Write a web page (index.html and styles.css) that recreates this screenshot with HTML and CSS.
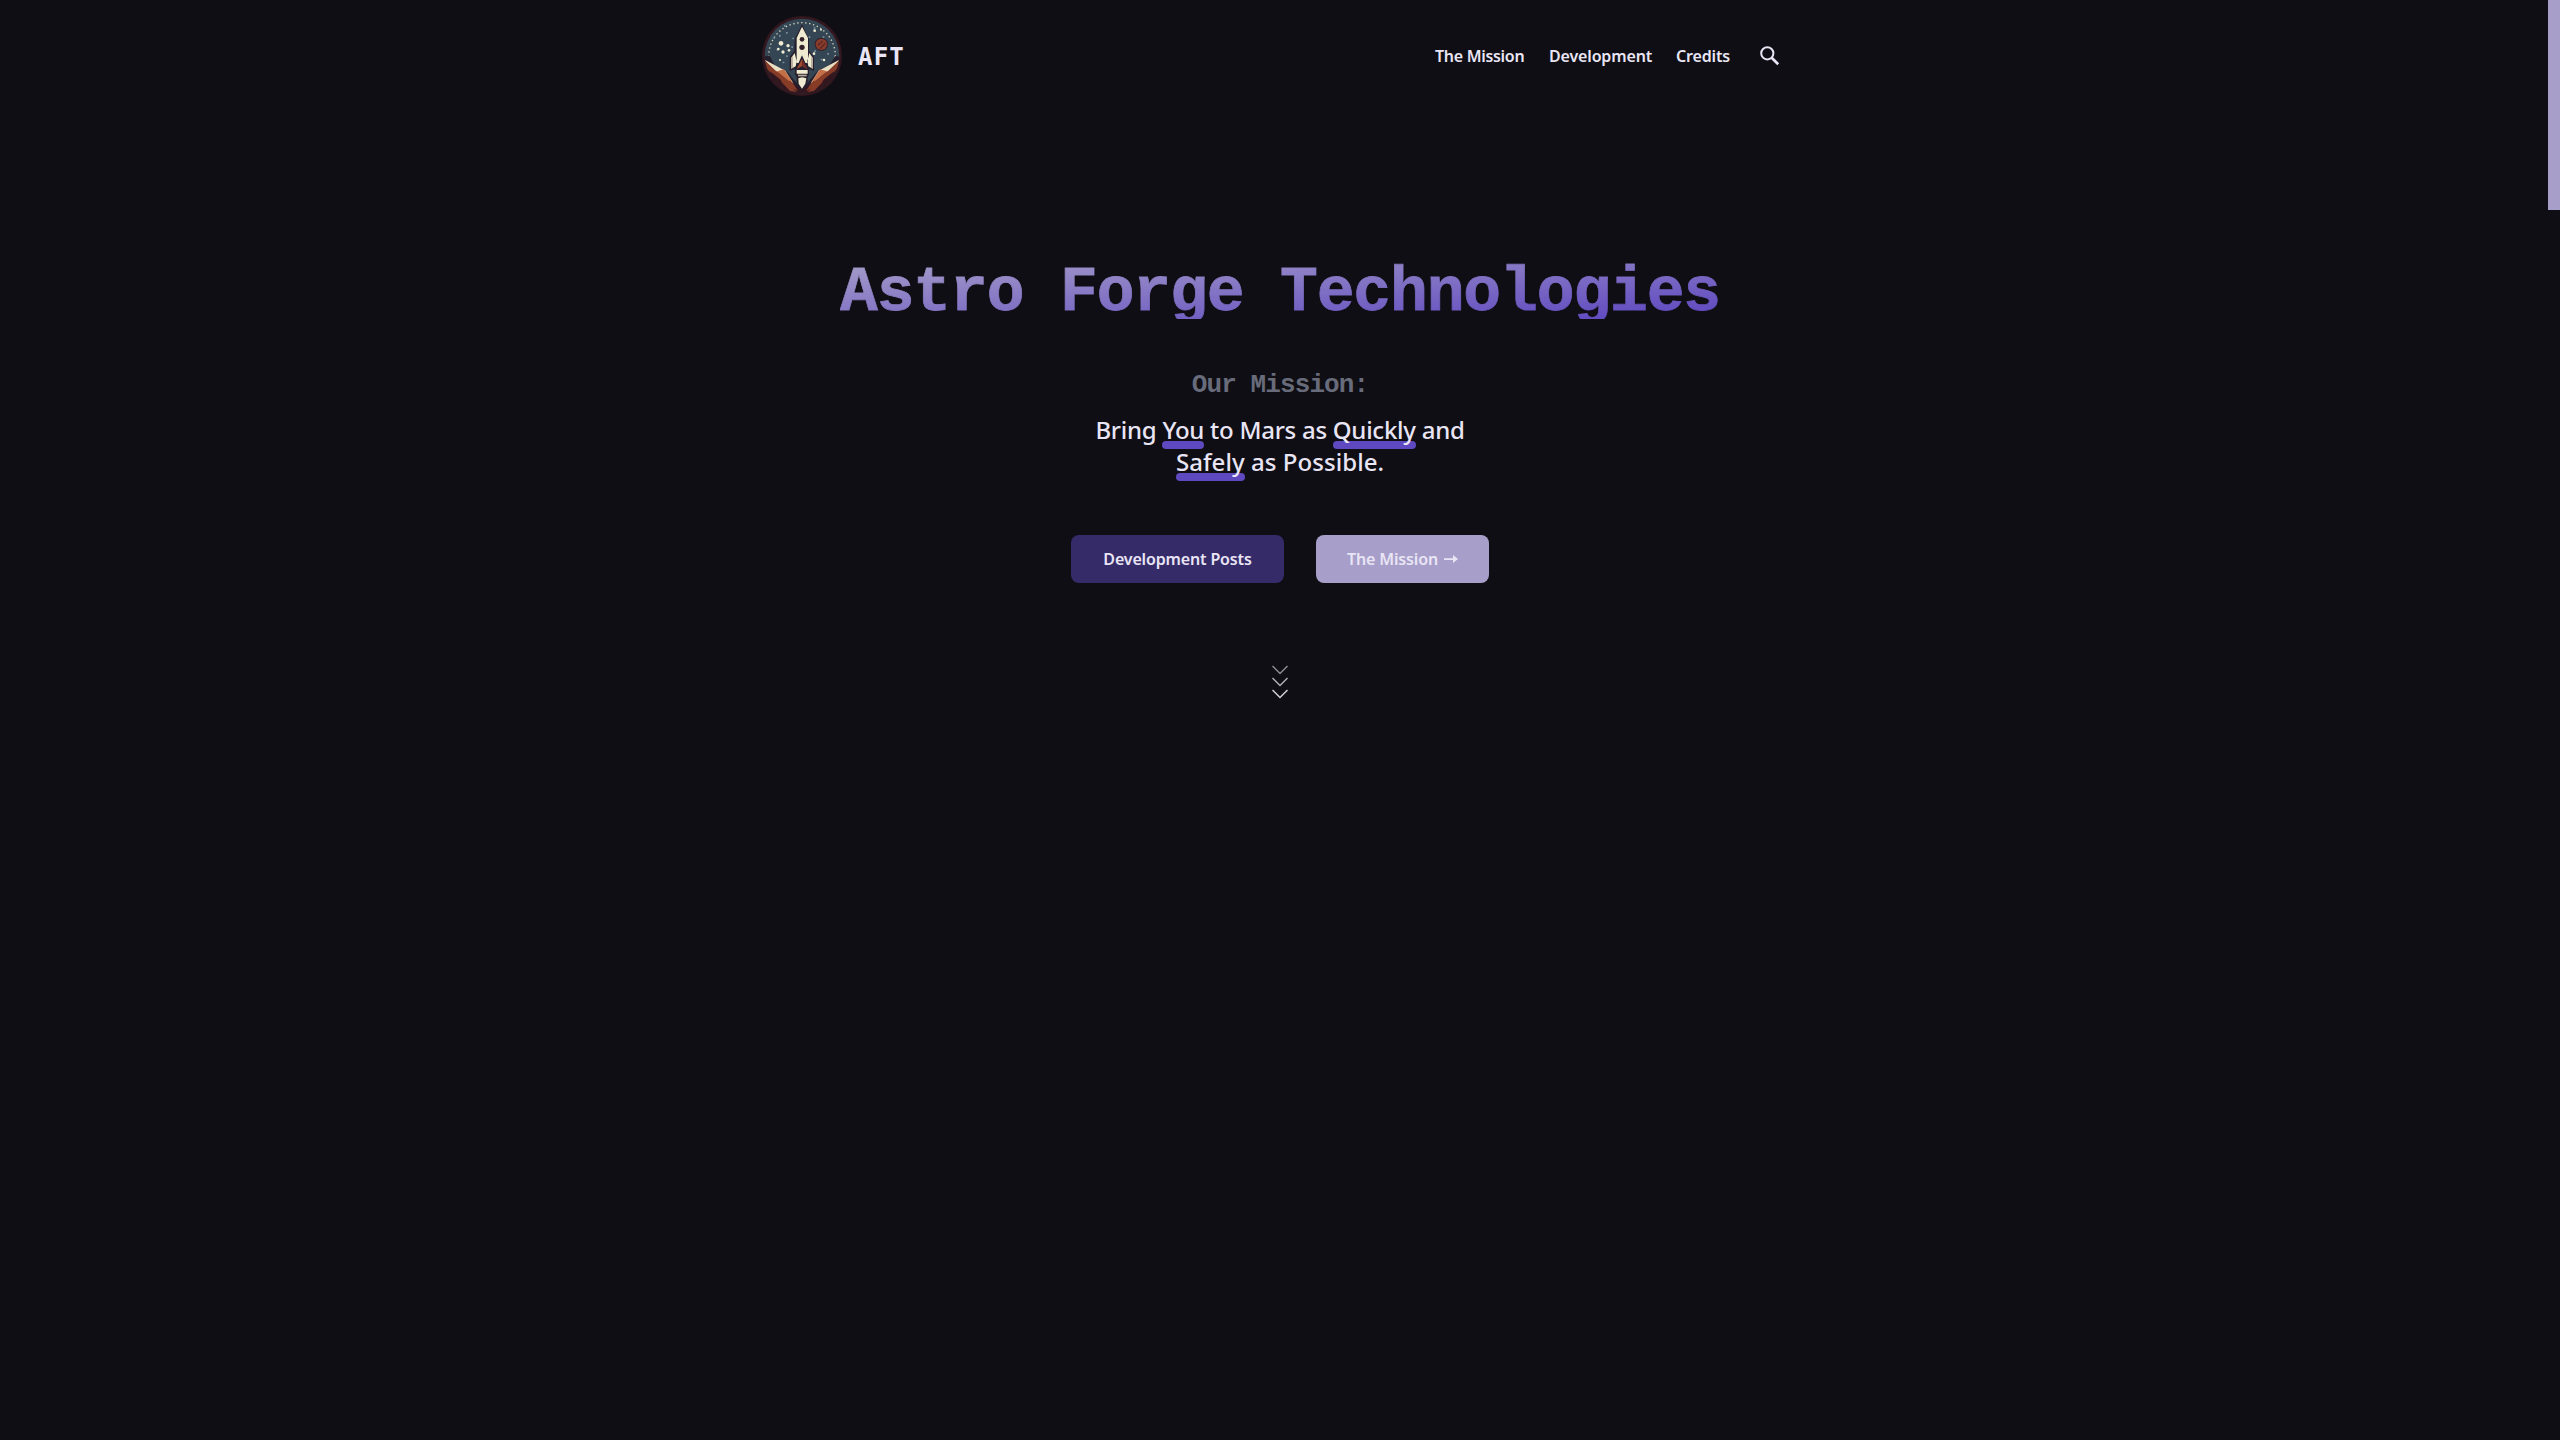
FILE: index.html
```html
<!DOCTYPE html>
<html lang="en">
<head>
<meta charset="utf-8">
<title>Astro Forge Technologies</title>
<link rel="stylesheet" href="styles.css">
</head>
<body>
<div class="scroll-thumb"></div>
<header class="site-header">
  <a class="brand">
    <svg class="logo" viewBox="0 0 240 240" aria-hidden="true">
      <defs><clipPath id="disc"><circle cx="120" cy="120" r="112"/></clipPath></defs>
      <circle cx="120" cy="120" r="120" fill="#32171f"/>
      <g clip-path="url(#disc)">
        <path fill="#344554" d="M0 0h240v240H0z"/>
        <circle cx="120" cy="120" r="100" fill="none" stroke="#d9d6bd" stroke-width="4" stroke-dasharray="4 8"/>
        <path fill="#344554" d="M0 122L40 150 120 190 200 150 240 122V240H0z"/>
        <g fill="#78909a"><path d="M34 63h5v5h-5zM51 57h5v5h-5zM72 48h5v5h-5zM91 65h5v5h-5zM44 99h5v5h-5zM72 118h5v5h-5zM140 61h5v5h-5zM163 72h5v5h-5zM182 61h5v5h-5zM157 103h5v5h-5zM196 111h5v5h-5zM176 128h5v5h-5zM62 137h5v5h-5zM88 91h5v5h-5zM155 33h5v5h-5zM66 27h5v5h-5z"/></g>
        <g fill="#eeebd1"><circle cx="57" cy="82" r="7"/><circle cx="78" cy="89" r="5"/><circle cx="49" cy="99" r="4"/><circle cx="63" cy="108" r="5"/><circle cx="81" cy="103" r="4"/><circle cx="54" cy="132" r="3"/><circle cx="158" cy="44" r="4"/><circle cx="177" cy="41" r="3"/><circle cx="156" cy="113" r="4"/><circle cx="186" cy="132" r="4"/></g>
        <circle cx="178" cy="85" r="20" fill="#35212b"/><circle cx="178" cy="85" r="17" fill="#873d2a"/><path stroke="#5c2526" stroke-width="4" d="M168 88l14-13M174 98l16-16"/>
        <path fill="#251e2c" d="M22 118l16 30 38 20 44 52 44-52 38-20 20-30 18 10v112H0V124z"/>
        <path fill="#32171f" d="M0 140l120 82 120-82v100H0z"/>
        <path fill="#e9dfc3" d="M8 131l62 33 24 38-34-18-24-14zM232 131l-62 33-24 38 34-18 24-14z"/>
        <path fill="#873c28" d="M8 133l34 32 30 12 22 26 14 22-26-12-34-14-34-42zM232 133l-34 32-30 12-22 26-14 22 26-12 34-14 34-42z"/>
        <path fill="#c36f48" d="M45 166l21-6 24 36-10-2zM195 166l-21-6-24 36 10-2z"/>
        <path fill="#32171f" d="M24 166l30 24 28 38-46-30zM216 166l-30 24-28 38 46-30z"/>
        <path fill="#873c28" d="M56 196l32 16 16 16-20-3zM184 196l-32 16-16 16 20-3z"/>
      </g>
      <path fill="#251e2c" d="M120 25l-22 45-1 35-14 18v42l24-9 1 12h24l2-12 22 9v-42l-15-18V70z"/>
      <path fill="#efebd0" d="M120 32l-16 34v75h34V66zM98 111l-10 14v33l13-7 3-15zM142 111l10 14v33l-13-7-3-15z"/>
      <path fill="#b7aa99" d="M148 119l4 6v33l-5-3zM92 119l-4 6v33l5-3z"/>
      <path fill="#251e2c" d="M120 118l-20 44h40z"/>
      <path fill="#a34a2e" d="M120 129l-16 30 16-9 16 9z"/><path fill="#6c2b29" d="M120 129l16 30-16-9z"/>
      <circle cx="120" cy="70" r="7" fill="#32212b"/><circle cx="120" cy="94" r="8" fill="#32212b"/>
      <path fill="#251e2c" d="M100 159h41v17l-4 6v16l-17 26-16-23v-19l-6-7z"/>
      <path fill="#efebd0" d="M104 162h33v11h-33zM109 187l11-3 13 3-3 16-10 15-10-15z"/>
      <path fill="#b7aa99" d="M108 176h26v5h-26z"/>
    </svg>
    <span class="brand-name">AFT</span>
  </a>
  <nav class="nav">
    <a class="nav-link mission">The Mission</a>
    <a class="nav-link development">Development</a>
    <a class="nav-link credits">Credits</a>
    <svg class="search" viewBox="0 0 20 20" aria-label="Search"><circle cx="7.3" cy="7.3" r="6.1"/><path d="M11.7 11.7L18.2 18.2" stroke-width="2.7"/></svg>
  </nav>
</header>
<main class="hero">
  <h1 class="title">Astro Forge Technologies</h1>
  <h2 class="subtitle">Our Mission:</h2>
  <p class="statement"><span class="line first">Bring <u>You</u> to Mars as <u>Quickly</u> and</span><span class="line second"><u>Safely</u> as Possible.</span></p>
  <div class="actions">
    <a class="button primary"><span>Development Posts</span></a>
    <a class="button secondary"><span>The Mission</span><svg class="arrow" viewBox="0 0 14 10"><path d="M0 4.2h9V1l5 4-5 4V5.900H0z"/></svg></a>
  </div>
  <svg class="chevrons" viewBox="0 0 16 34"><path opacity=".65" d="M0.5 1L8 8.500 15.500 1"/><path opacity=".83" d="M.5 13L8 20.500 15.500 13"/><path d="M.5 25L8 32.500 15.500 25"/></svg>
</main>
</body>
</html>
```
FILE: styles.css
```css
* { box-sizing: border-box; }
body {
  margin: 0;
  height: 100vh;
  overflow: hidden;
  background: #0f0e14;
  color: #e9e5f5;
  font-family: "Noto Sans", "Open Sans", sans-serif;
}
.scroll-thumb { position: absolute; top: 0; right: 0; width: 12px; height: 210px; background: #a79fc9; }
.site-header {
  width: 1036px;
  height: 112px;
  margin: 0 auto;
  padding: 0 18px 0 0;
  display: flex;
  align-items: center;
  justify-content: space-between;
}
.brand { display: flex; align-items: center; gap: 16px; }
.logo { width: 80px; height: 80px; }
.brand-name { padding-top: 2px; font: 700 24px/30px "DejaVu Sans Mono", monospace; letter-spacing: 1.2px; }
.nav { display: flex; align-items: center; font-size: 16px; font-weight: 600; letter-spacing: -0.15px; }
.nav-link { white-space: nowrap; padding-bottom: 1px; }
.mission { width: 114px; letter-spacing: -0.3px; }
.development { width: 127px; }
.credits { width: 84px; }
.search { width: 20px; height: 20px; fill: none; stroke: #e9e5f5; stroke-width: 2; }
.hero { display: flex; flex-direction: column; align-items: center; }
.title {
  height: 60px;
  margin: 147px 0 0;
  padding-top: 5px;
  font: 700 63px/60px "Liberation Mono", monospace;
  letter-spacing: -1.14px;
  color: transparent;
  background: linear-gradient(to bottom right, #a79fc9, #5d46c0);
  background-clip: text;
  -webkit-text-stroke: 0.8px transparent;
}
.subtitle { margin: 49px 0 0; font: 700 26px/34px "Liberation Mono", monospace; letter-spacing: -0.9px; color: #676b7a; }
.statement { margin: 12px 0 0; font-size: 24px; line-height: 32px; font-weight: 500; text-align: center; }
.line { display: block; white-space: nowrap; }
.first { letter-spacing: -0.26px; }
.second { letter-spacing: 0.06px; }
.statement u { position: relative; isolation: isolate; display: inline-block; text-decoration: none; }
.statement u::before { content: ""; position: absolute; z-index: -1; left: 0; right: 0; bottom: -3px; height: 8px; border-radius: 4px; background: #5e49c0; }
.actions { display: flex; gap: 32px; margin-top: 57px; }
.button { height: 48px; padding-bottom: 1px; border-radius: 8px; display: flex; align-items: center; justify-content: center; gap: 6px; font-size: 16px; font-weight: 600; letter-spacing: -0.15px; white-space: nowrap; }
.primary { width: 213px; background: #362b69; }
.secondary { width: 173px; background: #a79fc9; }
.arrow { width: 14px; height: 10px; fill: #e9e5f5; }
.chevrons { width: 16px; height: 34px; margin-top: 82px; fill: none; stroke: #d2d0d8; stroke-width: 1.5; }
```
